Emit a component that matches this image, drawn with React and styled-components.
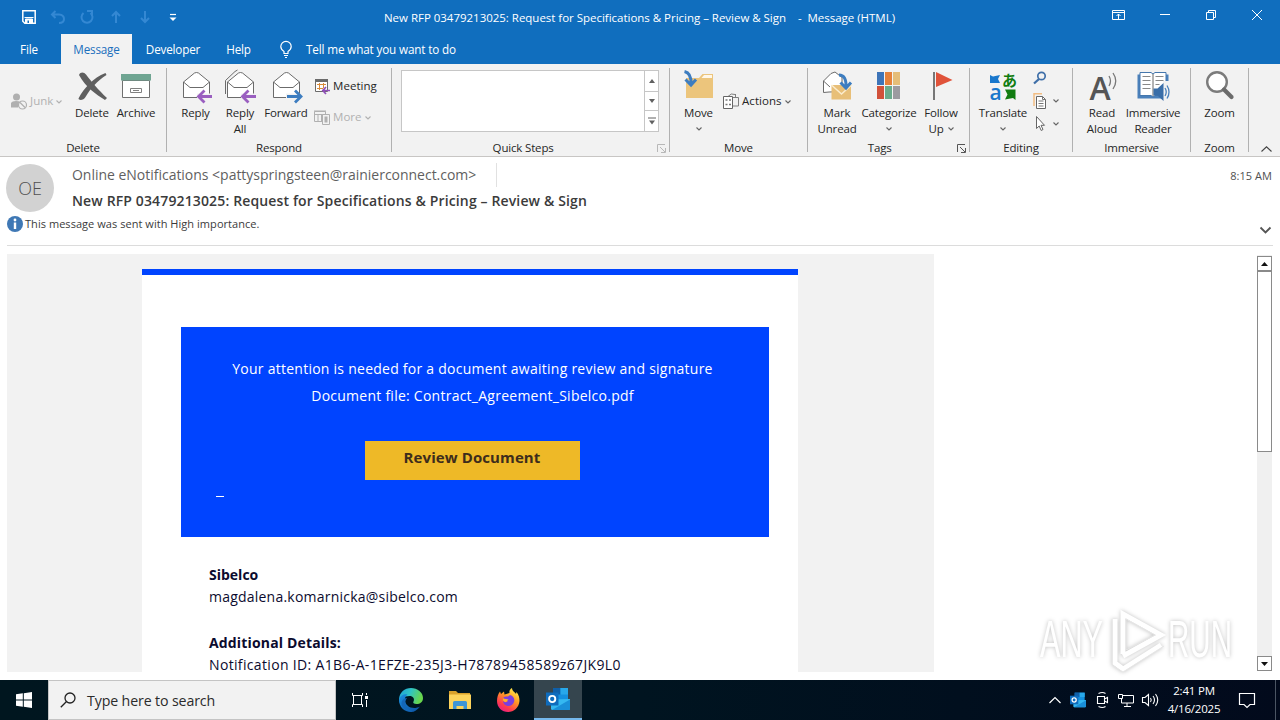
import React from "react";
import styled, { createGlobalStyle } from "styled-components";

const GlobalStyle = createGlobalStyle`
    * {
        box-sizing: border-box;
    }

    body {
        margin: 0;
        background: #fff;
        font-family: "Open Sans", "Noto Sans", sans-serif;
        font-size: 11.5px;
        color: #262626;
        overflow: hidden;
    }

    svg {
        display: block;
        flex: none;
        overflow: visible;
    }
`

const Window = styled.div`
    width: 1280px;
    height: 720px;
    display: flex;
    flex-direction: column;
    position: relative;
    overflow: hidden;
    white-space: nowrap;
`

/* ---------- title bar and tabs ---------- */

const TitleBar = styled.header`
    height: 34px;
    background: #106ebe;
    color: #fff;
    display: grid;
    grid-template-columns: 1fr auto 1fr;
    align-items: center;
`

const QuickAccess = styled.div`
    display: flex;
    align-items: center;
    gap: 13px;
    padding-left: 21px;
`

const Title = styled.div`
    white-space: pre;
    letter-spacing: -0.02px;
    padding-right: 1px;
`

const WindowControls = styled.div`
    display: flex;
    justify-content: flex-end;
    align-items: center;
    gap: 30px;
    padding: 0 15px 4px 0;
`

const Tabs = styled.nav`
    height: 30px;
    background: #106ebe;
    display: flex;
    align-items: stretch;
`

const Tab = styled.div`
    width: ${(p) => p.$w}px;
    display: flex;
    align-items: center;
    justify-content: center;
    font-size: 11.7px;
    letter-spacing: -0.18px;
    padding-bottom: 1px;
    background: ${(p) => (p.$active ? "#f2f2f2" : "transparent")};
    color: ${(p) => (p.$active ? "#1b6fbd" : "#fff")};
`

const TellMe = styled.div`
    display: flex;
    align-items: center;
    gap: 12px;
    margin-left: 15px;
    padding-bottom: 1px;
    color: #fff;
    font-size: 11.7px;
    letter-spacing: -0.14px;
`

/* ---------- ribbon ---------- */

const Ribbon = styled.section`
    height: 93px;
    background: #f2f2f2;
    border-bottom: 1px solid #c8c6c4;
    display: flex;
    letter-spacing: -0.17px;
`

const Group = styled.div`
    width: ${(p) => p.$w}px;
    height: 84px;
    margin-top: 4px;
    border-right: 1px solid #b1b1b1;
`

const GroupBody = styled.div`
    height: 72px;
    display: flex;
    padding-left: ${(p) => p.$pad || 0}px;
`

const GroupName = styled.div`
    height: 16px;
    line-height: 16px;
    display: flex;
    align-items: center;
    padding-right: ${(p) => p.$right || 0}px;

    span {
        flex: 1;
        text-align: center;
    }
`

const BigButton = styled.div`
    width: ${(p) => p.$w}px;
    padding-top: 2px;
    display: flex;
    flex-direction: column;
    align-items: center;
    line-height: 16px;
    text-align: center;

    > svg:first-child {
        margin-bottom: 3px;
    }
`

const Line = styled.div`
    display: flex;
    align-items: center;
    gap: 4px;
    height: 16px;
`

const SmallButtons = styled.div`
    display: flex;
    flex-direction: column;
    gap: ${(p) => p.$gap || 0}px;
    padding-top: ${(p) => p.$top}px;
    padding-left: ${(p) => p.$left || 0}px;
`

const SmallButton = styled.div`
    height: 16px;
    line-height: 14px;
    display: flex;
    align-items: center;
    gap: ${(p) => p.$gap || 4}px;
    color: ${(p) => (p.$disabled ? "#b1b1b1" : "#262626")};
    letter-spacing: 0.05px;
`

const SmallLabel = styled.span`
    padding-bottom: 2px;
`

const Gallery = styled.div`
    width: 258px;
    height: 62px;
    margin-top: 2px;
    background: #fff;
    border: 1px solid #c6c6c6;
    display: flex;
    justify-content: flex-end;
`

const GalleryScroll = styled.div`
    width: 14px;
    border-left: 1px solid #c6c6c6;
    display: grid;
    grid-template-rows: 21px 19px 20px;

    div {
        display: grid;
        place-items: center;
        border-bottom: 1px solid #c6c6c6;
    }

    div:last-child {
        border-bottom: none;
    }
`

const Collapse = styled.div`
    flex: 1;
    display: flex;
    justify-content: flex-end;
    align-items: flex-end;
    padding: 0 8px 4px 0;
`

/* ---------- message header ---------- */

const MessageHeader = styled.section`
    height: 89px;
    margin: 0 7px;
    border-bottom: 1px solid #dcdcdc;
`

const SenderRow = styled.div`
    height: 57px;
    display: flex;
    margin-left: -1px;
    padding-top: 7px;
`

const Avatar = styled.div`
    width: 48px;
    height: 48px;
    border-radius: 50%;
    background: #d2d2d2;
    color: #505050;
    font-size: 18px;
    font-weight: 300;
    display: grid;
    place-items: center;
`

const SenderText = styled.div`
    flex: 1;
    margin-left: 18px;
`

const From = styled.div`
    height: 24px;
    display: flex;
    margin-top: -1px;

    span {
        width: 425px;
        border-right: 1px solid #e1e1e1;
        line-height: 24px;
        font-size: 14px;
        letter-spacing: -0.02px;
        color: #5f5f5f;
    }
`

const Subject = styled.div`
    font-size: 14px;
    font-weight: 600;
    line-height: 20px;
    margin-top: 4px;
    letter-spacing: 0.137px;
    color: #3b3b3b;
`

const Time = styled.div`
    font-size: 11px;
    letter-spacing: 0.05px;
    color: #505050;
    padding-top: 4px;
    margin-right: 1px;
`

const InfoRow = styled.div`
    height: 20px;
    display: flex;
    align-items: center;
    gap: 2px;
    font-size: 11px;
    letter-spacing: 0.045px;
    color: #3b3b3b;

    span {
        padding-bottom: 2px;
    }

    svg:last-child {
        margin: 11px 2px 0 auto;
    }
`

/* ---------- message body ---------- */

const Reading = styled.main`
    height: 434px;
    padding: 8px 8px 8px 7px;
    display: flex;
    justify-content: space-between;
`

const Page = styled.div`
    width: 927px;
    height: 418px;
    background: #f2f2f2;
    padding: 15px 0 0 135px;
`

const Card = styled.article`
    width: 656px;
    height: 403px;
    background: #fff;
    border-top: 6px solid #0044ff;
    padding: 52px 29px 0 39px;
    font-size: 14px;
`

const Notice = styled.div`
    height: 210px;
    background: #0044ff;
    color: #fff;
    padding: 28px 40px 0 35px;
    line-height: 27px;
    display: flex;
    flex-direction: column;
    align-items: center;
    letter-spacing: 0.25px;
`

const ReviewButton = styled.div`
    width: 215px;
    height: 39px;
    margin-top: 32px;
    padding-right: 1px;
    background: #eeb927;
    color: #3d2c1c;
    font-size: 15px;
    font-weight: 700;
    line-height: 32px;
    text-align: center;
    letter-spacing: 0.1px;
`

const Underline = styled.div`
    align-self: flex-start;
    width: 8px;
    height: 1px;
    margin-top: 16px;
    background: #fff;
`

const Details = styled.div`
    padding: 27px 0 0 28px;
    line-height: 22px;
    color: #0b0b2e;

    strong {
        display: block;
        letter-spacing: ${(p) => p.$ls || 0}px;
    }

    & + & {
        padding-top: 24px;
    }
`

const DetailValue = styled.div`
    letter-spacing: ${(p) => p.$ls}px;
`

const Scrollbar = styled.div`
    width: 15px;
    height: 416px;
    margin-top: 1px;
    background: #f0f0f0;
    display: flex;
    flex-direction: column;
`

const ScrollArrow = styled.div`
    height: 15px;
    background: #fff;
    border: 1px solid #8a8a8a;
    display: grid;
    place-items: center;
    margin-top: ${(p) => (p.$bottom ? "auto" : "1px")};
`

const ScrollThumb = styled.div`
    height: 181px;
    background: #fff;
    border: 1px solid #8a8a8a;
`

const Watermark = styled.div`
    position: absolute;
    left: 1036px;
    top: 608px;
    filter: drop-shadow(0 0 2px rgba(0, 0, 0, 0.25));
`

/* ---------- taskbar ---------- */

const Taskbar = styled.footer`
    height: 40px;
    background: linear-gradient(90deg, #00161f, #001420 50%, #020a1c);
    display: flex;
    color: #fff;
`

const TaskButton = styled.div`
    width: ${(p) => p.$w || 49}px;
    display: grid;
    place-items: center;
    background: ${(p) => (p.$active ? "#35454e" : "transparent")};
    border-bottom: ${(p) => (p.$active ? "2px solid #76b9ed" : "none")};
`

const Search = styled.div`
    width: 288px;
    background: #f2f2f2;
    border: 1px solid #c4c4c4;
    color: #2b2b2b;
    display: flex;
    align-items: center;
    gap: 11px;
    padding-left: 11px;
    font-size: 14.2px;
    letter-spacing: -0.13px;
`

const Tray = styled.div`
    margin-left: auto;
    display: flex;
    align-items: center;
    gap: 8px;
`

const Clock = styled.div`
    width: 58px;
    margin: 0 8px 1px -1px;
    text-align: center;
    line-height: 18px;
    letter-spacing: -0.2px;
`

const ShowDesktop = styled.div`
    width: 5px;
    height: 40px;
    margin-left: 12px;
    border-left: 1px solid #4b5563;
`

/* ---------- icons ---------- */

const Svg = ({ w = 16, h = w, children, ...rest }) => (
    <svg width={w} height={h} viewBox={`0 0 ${w} ${h}`} fill="none" {...rest}>
        {children}
    </svg>
)

const Chevron = ({ color = "#666" }) => (
    <Svg w={6} h={4}>
        <path d="M.5 .5 3 3 5.500 .5" stroke={color} strokeWidth="1.100" />
    </Svg>
)

const Triangle = ({ up, color = "#606060", w = 6 }) => (
    <Svg w={w} h={4}>
        <path d={up ? `M0 4 ${w / 2} 0 ${w} 4Z` : `M0 0 ${w / 2} 4 ${w} 0Z`} fill={color} />
    </Svg>
)

const Launcher = ({ color = "#555" }) => (
    <Svg w={9}>
        <path d="M.5 8V.5H8M3 3l5 5M8.500 4v4.500H4" stroke={color} />
    </Svg>
)

const SaveIcon = () => (
    <Svg>
        <path d="M1.800 1.800h12.400v12.400H3.800l-2-2Z" stroke="#fff" strokeWidth="1.500" />
        <path d="M3.500 8.500h9M4.500 10h7v4.500h-7Z" fill="#fff" stroke="#fff" />
        <path d="M6.500 11.500h1.500v2.500H6.500Z" fill="#106ebe" />
    </Svg>
)

const Faded = ({ d }) => (
    <Svg>
        <path d={d} stroke="#3488d3" strokeWidth="2" />
    </Svg>
)

const Envelope = ({ back }) => (
    <g stroke="#6b6b6b">
        {back && <path d="M1.500 24V10.500L11 1.500l2.500-1.500" />}
        <path d="M3.500 12 14.500 3Q16.500 2 18.500 3L29.500 12V27.500H3.500Z" fill="#fff" />
        <path d="M3.500 12 10 17.500H23L29.500 12" />
    </g>
)

const ReplyIcon = ({ all }) => (
    <Svg w={32}>
        <Envelope back={all} />
        <path d="M17 26.500H33" stroke="#f2f2f2" strokeWidth="6" />
        <path d="M18 26.500H32M24.500 20.500l-6 6 6 6" stroke="#9a5fc0" strokeWidth="2.800" />
    </Svg>
)

const ForwardIcon = () => (
    <Svg w={32}>
        <Envelope />
        <path d="M16 26.500H31" stroke="#f2f2f2" strokeWidth="6" />
        <path d="M17 26.500H31M25 20.500l6 6-6 6" stroke="#3d7dc0" strokeWidth="2.800" />
    </Svg>
)

const DeleteIcon = () => (
    <Svg w={32}>
        <path d="M3 5C4.500 1.500 8 2 10 4.500c6 8 12 15 21 23.500l-2 2C20 24.500 9.500 17 3 5Z" fill="#5f5f5f" />
        <path d="M30.500 5C21 11 15 18 9.500 27c-1.500 3-6.500 4-7 1.500C8 18 17 8 29.500 3Z" fill="#5f5f5f" />
    </Svg>
)

const ArchiveIcon = () => (
    <Svg w={32}>
        <path d="M2.500 10.500h27v17h-27Z" fill="#fff" stroke="#707070" />
        <path d="M1 4h30v6.500H1Z" fill="#6fa592" />
        <path d="M10.500 18.500h11v4h-11ZM13 20.500h6" stroke="#808080" />
    </Svg>
)

const JunkIcon = () => (
    <Svg>
        <circle cx="5.500" cy="3" r="3.500" fill="#b0b0b0" />
        <path d="M0 13.500V9Q1 7 5 7q3.500 0 4 1l-2 5.500Z" fill="#b0b0b0" />
        <circle cx="11.500" cy="11" r="4" fill="#f2f2f2" stroke="#b0b0b0" strokeWidth="1.200" />
        <path d="m9 8.500 5 5" stroke="#b0b0b0" strokeWidth="1.200" />
    </Svg>
)

const MeetingIcon = () => (
    <Svg>
        <path d="M1.500 2.500h12v10h-12Z" fill="#fff" stroke="#6b6b6b" />
        <path d="M1 0h13v3H1Z" fill="#6b6b6b" />
        <path d="M3 5.500h9M3 9.500h6M5.500 4v7M9.500 4v5" stroke="#d98b3a" />
        <path d="M9 11.500h7M12 8 8.800 11.500l3.200 3.500" stroke="#8f4fb8" strokeWidth="1.700" />
    </Svg>
)

const MoreIcon = () => (
    <Svg>
        <path d="M.5 1.500h11v10H.5ZM.5 4.500h11M4 4v7M7.500 4v7M0 1h12" stroke="#b0b0b0" />
        <path d="M8.500 4.500h7v10h-7Z" fill="#f2f2f2" stroke="#b0b0b0" />
        <path d="M10.500 6.500h3v6h-3Z" fill="#b0b0b0" />
    </Svg>
)

const MoveIcon = () => (
    <Svg w={32}>
        <path d="M3 8h13l3.500-4H30v24H3Z" fill="#ecc57c" />
        <path d="M18.500 8 21 5h8v3Z" fill="#fff7e8" />
        <path d="M1.500 1.500Q8.500 3 8 14M2.500 9.500l5.500 5.500 5-5.500" stroke="#3d7dc0" strokeWidth="3" />
    </Svg>
)

const ActionsIcon = () => (
    <Svg>
        <path d="M5 2.500Q8-1.500 12 .5M12.500 0v3.500H9M10 3.500h5.500V12H10" stroke="#808080" />
        <path d="M.5 2.500h9v12h-9Z" fill="#fff" stroke="#666" />
        <path d="M2.500 6h2M6 6h2M2.500 10.500h2M6 10.500h2" stroke="#777" strokeWidth="1.500" />
    </Svg>
)

const UnreadIcon = () => (
    <Svg w={32}>
        <path d="M2.500 22.500V11L10 3.500l4-1.500 7 5.500v14L8 22Z" fill="#fff" stroke="#6b6b6b" />
        <path d="M2.500 11 9 17" stroke="#6b6b6b" />
        <path d="M10.500 15H30v14.500H10.500Z" fill="#e8bf78" />
        <path d="m10.500 15 10 9 10-9" stroke="#fbeccd" strokeWidth="1.500" />
        <path d="M18 5Q25.500 5 25 17M19.500 12.500l5.500 5.500 5-5.500" stroke="#3d7dc0" strokeWidth="3" />
    </Svg>
)

const CategorizeIcon = () => (
    <Svg w={32}>
        <path d="M4 2h7v13H4Z" fill="#3d74b8" />
        <path d="M12 2h7v13h-7Z" fill="#e5813a" />
        <path d="M20 2h7v13h-7Z" fill="#e5bd78" />
        <path d="M4 16h7v13H4Z" fill="#d1513a" />
        <path d="M12 16h7v13h-7Z" fill="#6aab8c" />
        <path d="M20 16h7v13h-7Z" fill="#9c9aa0" />
    </Svg>
)

const FlagIcon = () => (
    <Svg w={32}>
        <path d="M9 2v28" stroke="#777" strokeWidth="2" />
        <path d="m11 2 16.500 8L11 17Z" fill="#e0533a" />
    </Svg>
)

const GlyphText = styled.text`
    font-family: "Open Sans", "Noto Sans CJK JP", sans-serif;
    font-size: ${(p) => p.$size}px;
    font-weight: ${(p) => p.$weight || 600};
    letter-spacing: 0;
`

const TranslateIcon = () => (
    <Svg w={32}>
        <path d="M3 5 6 6.500l7-1.500-2 4 2 4H3Z" fill="#1977cc" />
        <path d="M18 19.500h10.500V30L26 28l-8 1.500 2.500-5Z" fill="#107c10" />
        <GlyphText x="15" y="15.500" $size={15} $weight={700} fill="#107c10">あ</GlyphText>
        <GlyphText x="2.500" y="29.500" $size={21} fill="#1977cc">a</GlyphText>
    </Svg>
)

const FindIcon = () => (
    <Svg w={14}>
        <circle cx="8.500" cy="5" r="3.700" stroke="#3f6fa8" strokeWidth="1.700" />
        <path d="m6 8-5 4.500" stroke="#3f6fa8" strokeWidth="2.300" />
    </Svg>
)

const CopyIcon = () => (
    <Svg w={14} h={16}>
        <path d="M1 13V.8h8" stroke="#f2bd83" strokeWidth="1.500" />
        <path d="M3.500 3.500h6l3 3v9h-9Z" fill="#fff" stroke="#666" />
        <path d="M5.500 8h5M5.500 10.500h5M5.500 13h5M9.500 3.500v3h3" stroke="#777" />
    </Svg>
)

const SelectIcon = () => (
    <Svg w={14} h={16}>
        <path d="M3.500 .5v12l2.700-2.500 2 4.500 1.800-1-2-4.200h3.500Z" fill="#fff" stroke="#666" />
    </Svg>
)

const ReadAloudIcon = () => (
    <Svg w={32}>
        <GlyphText x="3.500" y="29.500" $size={32} $weight={600} fill="#555">A</GlyphText>
        <path d="M23 6q3 5 0 10M27 3q5.500 8 0 16" stroke="#777" strokeWidth="1.300" />
    </Svg>
)

const ReaderIcon = () => (
    <Svg w={32}>
        <path d="M.5 4.500h31v24H.5Z" fill="#4a80bb" />
        <path d="M3 2.500h11l2 1.500 2-1.500h11V25.500H18l-2 1.500-2-1.500H3Z" fill="#fff" stroke="#4577ad" />
        <path d="M16 4v22" stroke="#666" />
        <path d="M5.500 6.500h8M5.500 10.500h8M5.500 14.500h8M5.500 18.500h8M18.500 6.500h8M18.500 10.500h8M18.500 14.500h4" stroke="#888" />
        <path d="M26 11v20h6V11Z" fill="#f2f2f2" />
        <path d="M16.500 18.500h4L26.500 13v18l-6-5.500h-4Z" fill="#3a6ea8" />
        <path d="M28 18q2.500 4 0 8M30 15.500q4 6.500 0 13" stroke="#4a80bb" strokeWidth="1.300" />
    </Svg>
)

const ZoomIcon = () => (
    <Svg w={32}>
        <circle cx="13" cy="12" r="9.800" fill="#fff" stroke="#7b7b7b" strokeWidth="2.400" />
        <path d="m20 19.500 7.500 7.500" stroke="#6b6b6b" strokeWidth="4.200" strokeLinecap="round" />
    </Svg>
)

const EdgeIcon = () => (
    <Svg w={24}>
        <defs>
            <linearGradient id="edgeTop" x1="0" y1="0" x2="1" y2=".3">
                <stop offset="0" stopColor="#1ba0d8" />
                <stop offset=".5" stopColor="#2fc3c5" />
                <stop offset="1" stopColor="#68d64d" />
            </linearGradient>
            <linearGradient id="edgeLow" x1="0" y1="0" x2="1" y2="1">
                <stop offset="0" stopColor="#1b8ee0" />
                <stop offset="1" stopColor="#0c4f9e" />
            </linearGradient>
        </defs>
        <path d="M0 11C.5 4.500 5.500 0 12 0s12 4.500 12 10c0 4-3 6-6.500 6-2.500 0-4-1-3-2.500 1.500-3-.5-5.500-4-5.500C5 8 1 11 0 15Z" fill="url(#edgeTop)" />
        <path d="M0 12C1 7.500 5 5.800 8.500 6.500 5 9 5 14 8.500 17.500c3.500 3.300 9 3 12.500 1C18.500 22 15.500 24 12 24 5 24 0 18.500 0 12Z" fill="url(#edgeLow)" />
        <path d="M8 10c-3.500 4-1.500 11 5.500 13.500C6 24 1 18 3 13c1-2 3-3 5-3Z" fill="#1467b8" />
    </Svg>
)

const ExplorerIcon = () => (
    <Svg w={22} h={20}>
        <path d="M0 1h7l2 2h12v4H0Z" fill="#d9a12b" />
        <path d="M0 4.500h22V19H0Z" fill="#fcd35c" />
        <path d="M4 19v-6.500q0-1.500 1.500-1.500h11q1.500 0 1.500 1.500V19h-3.500v-3h-7v3Z" fill="#3f95d6" />
    </Svg>
)

const FirefoxIcon = () => (
    <Svg w={24}>
        <defs>
            <linearGradient id="fox" x1=".8" y1="0" x2=".2" y2="1">
                <stop offset="0" stopColor="#fff44f" />
                <stop offset=".4" stopColor="#ff9a24" />
                <stop offset=".75" stopColor="#ff3b4e" />
                <stop offset="1" stopColor="#e81a8a" />
            </linearGradient>
        </defs>
        <path d="M1 13c0-4 1-7 3-9.500L5 6l3-2.500.5 3 5-1.500C13 3 14 1 16 0c0 3 3 4 4 6l.5-2C23 7 23.500 10 23.500 13 23 19.500 18 24 12 24S1 19.500 1 13Z" fill="url(#fox)" />
        <path d="M7.500 9.500c2-1.500 3-1 4.500-1l2-1.500c3.500 1 5 4 4 7s-4 4.500-6.500 4S7 15.500 7 13c1.500 1.500 3.500 1.500 5 .5-2-.5-4.500-1.500-4.500-4Z" fill="#7a3fe0" />
        <path d="M7 10.500c2.500 0 4 1 5.500 1l-2.500 2.500c-2 0-3.500-1.500-3-3.500Z" fill="#ffb02e" />
    </Svg>
)

const OutlookIcon = ({ size = 24 }) => (
    <svg width={size} height={size} viewBox="0 0 24 24">
        <path d="M7 1h15v13H7Z" fill="#1490df" />
        <path d="M7 1h7.500v6.500H7Z" fill="#0f5fa8" />
        <path d="M14.500 1H22v6.500h-7.500Z" fill="#28a8ea" />
        <path d="M5 12.500 24 12v9.500q0 1.500-1.500 1.500h-16Q5 23 5 21.500Z" fill="#35b8f1" />
        <path d="M24 12.500 6 23h17q1-.5 1-1.500Z" fill="#1a8fd8" />
        <path d="M0 5.500h12.500v13H0Z" fill="#0f6cbd" />
        <circle cx="6.200" cy="12" r="3.100" fill="none" stroke="#fff" strokeWidth="1.900" />
    </svg>
)

const App = () => {
    return (
        <Window>
            <GlobalStyle />

            <TitleBar>
                <QuickAccess>
                    <SaveIcon />
                    <Faded d="M5.500 2 2 5.500 5.500 9M2.500 5.500H9q5 .5 5 4.500t-5 4" />
                    <Faded d="M4.500 4A5.500 5.500 0 1 0 11.500 4M8 2h5v5" />
                    <Faded d="M8 14V3M4 7l4-4 4 4" />
                    <Faded d="M8 2v11M4 9l4 4 4-4" />
                    <Svg w={16}>
                        <path d="M4 5.500h6" stroke="#fff" strokeWidth="1.200" />
                        <path d="M3.500 8.500h7L7 12Z" fill="#fff" />
                    </Svg>
                </QuickAccess>
                <Title>{"New RFP 03479213025: Request for Specifications & Pricing – Review & Sign    -  Message (HTML)"}</Title>
                <WindowControls>
                    <Svg w={16}>
                        <path d="M1.500 3.500h12v9h-12ZM1.500 5.500h12M7.500 12V7M5.500 9l2-2 2 2" stroke="#fff" />
                    </Svg>
                    <Svg w={16}>
                        <path d="M3 7.500h10" stroke="#fff" />
                    </Svg>
                    <Svg w={16}>
                        <path d="M3.500 5.500h7v7h-7ZM5.500 5V3.500h7v7H11" stroke="#fff" />
                    </Svg>
                    <Svg w={16}>
                        <path d="m3 3 10 10M13 3 3 13" stroke="#fff" />
                    </Svg>
                </WindowControls>
            </TitleBar>

            <Tabs>
                <Tab $w={58}>File</Tab>
                <Tab $w={3} />
                <Tab $w={71} $active>Message</Tab>
                <Tab $w={82}>Developer</Tab>
                <Tab $w={49}>Help</Tab>
                <TellMe>
                    <Svg w={16} h={18}>
                        <path d="M6 13.500V11.500Q2.800 9.500 2.800 6.500a5.200 5.200 0 0 1 10.400 0q0 3-3.200 5v2ZM6 15.500h4M7 17.500h2" stroke="#fff" strokeWidth="1.200" />
                    </Svg>
                    Tell me what you want to do
                </TellMe>
            </Tabs>

            <Ribbon>
                <Group $w={167}>
                    <GroupBody>
                        <SmallButtons $top={26} $left={11}>
                            <SmallButton $disabled $gap={3}>
                                <JunkIcon />
                                <SmallLabel>Junk</SmallLabel>
                                <Chevron color="#b1b1b1" />
                            </SmallButton>
                        </SmallButtons>
                        <BigButton $w={59}>
                            <DeleteIcon />
                            Delete
                        </BigButton>
                        <BigButton $w={29}>
                            <ArchiveIcon />
                            Archive
                        </BigButton>
                    </GroupBody>
                    <GroupName><span>Delete</span></GroupName>
                </Group>

                <Group $w={225}>
                    <GroupBody $pad={5}>
                        <BigButton $w={47}>
                            <ReplyIcon />
                            Reply
                        </BigButton>
                        <BigButton $w={42}>
                            <ReplyIcon all />
                            <Line>Reply</Line>
                            <Line>All</Line>
                        </BigButton>
                        <BigButton $w={50}>
                            <ForwardIcon />
                            Forward
                        </BigButton>
                        <SmallButtons $top={11} $left={3} $gap={15}>
                            <SmallButton $gap={3}>
                                <MeetingIcon />
                                <SmallLabel>Meeting</SmallLabel>
                            </SmallButton>
                            <SmallButton $disabled $gap={3}>
                                <MoreIcon />
                                <SmallLabel>More</SmallLabel>
                                <Chevron color="#b1b1b1" />
                            </SmallButton>
                        </SmallButtons>
                    </GroupBody>
                    <GroupName><span>Respond</span></GroupName>
                </Group>

                <Group $w={278}>
                    <GroupBody $pad={9}>
                        <Gallery>
                            <GalleryScroll>
                                <div><Triangle up /></div>
                                <div><Triangle /></div>
                                <div>
                                    <Svg w={8} h={8}>
                                        <path d="M0 1h8" stroke="#606060" />
                                        <path d="M1 3.500h6L4 7.500Z" fill="#606060" />
                                    </Svg>
                                </div>
                            </GalleryScroll>
                        </Gallery>
                    </GroupBody>
                    <GroupName $right={3}>
                        <span>Quick Steps&nbsp;</span>
                        <Launcher color="#b8b8b8" />
                    </GroupName>
                </Group>

                <Group $w={138}>
                    <GroupBody $pad={4}>
                        <BigButton $w={49}>
                            <MoveIcon />
                            <Line>Move</Line>
                            <Line><Chevron /></Line>
                        </BigButton>
                        <SmallButtons $top={26}>
                            <SmallButton $gap={3}>
                                <ActionsIcon />
                                <SmallLabel>Actions</SmallLabel>
                                <Chevron />
                            </SmallButton>
                        </SmallButtons>
                    </GroupBody>
                    <GroupName><span>Move</span></GroupName>
                </Group>

                <Group $w={162}>
                    <GroupBody $pad={4}>
                        <BigButton $w={50}>
                            <UnreadIcon />
                            <Line>Mark</Line>
                            <Line>Unread</Line>
                        </BigButton>
                        <BigButton $w={54}>
                            <CategorizeIcon />
                            <Line>Categorize</Line>
                            <Line><Chevron /></Line>
                        </BigButton>
                        <BigButton $w={50}>
                            <FlagIcon />
                            <Line>Follow</Line>
                            <Line>Up <Chevron /></Line>
                        </BigButton>
                    </GroupBody>
                    <GroupName $right={3}>
                        <span>Tags&nbsp;&nbsp;</span>
                        <Launcher />
                    </GroupName>
                </Group>

                <Group $w={103}>
                    <GroupBody $pad={6}>
                        <BigButton $w={54}>
                            <TranslateIcon />
                            <Line>Translate</Line>
                            <Line><Chevron /></Line>
                        </BigButton>
                        <SmallButtons $top={2} $left={3} $gap={7}>
                            <SmallButton>
                                <FindIcon />
                            </SmallButton>
                            <SmallButton $gap={6}>
                                <CopyIcon />
                                <Chevron />
                            </SmallButton>
                            <SmallButton $gap={6}>
                                <SelectIcon />
                                <Chevron />
                            </SmallButton>
                        </SmallButtons>
                    </GroupBody>
                    <GroupName><span>Editing</span></GroupName>
                </Group>

                <Group $w={118}>
                    <GroupBody $pad={5}>
                        <BigButton $w={48}>
                            <ReadAloudIcon />
                            <Line>Read</Line>
                            <Line>Aloud</Line>
                        </BigButton>
                        <BigButton $w={54}>
                            <ReaderIcon />
                            <Line>Immersive</Line>
                            <Line>Reader</Line>
                        </BigButton>
                    </GroupBody>
                    <GroupName><span>Immersive</span></GroupName>
                </Group>

                <Group $w={58}>
                    <GroupBody>
                        <BigButton $w={57}>
                            <ZoomIcon />
                            Zoom
                        </BigButton>
                    </GroupBody>
                    <GroupName><span>Zoom</span></GroupName>
                </Group>

                <Collapse>
                    <Svg w={11} h={6}>
                        <path d="M.5 5.500 5.500 .8l5 4.700" stroke="#444" strokeWidth="1.100" />
                    </Svg>
                </Collapse>
            </Ribbon>

            <MessageHeader>
                <SenderRow>
                    <Avatar>OE</Avatar>
                    <SenderText>
                        <From><span>Online eNotifications &lt;pattyspringsteen@rainierconnect.com&gt;</span></From>
                        <Subject>New RFP 03479213025: Request for Specifications &amp; Pricing – Review &amp; Sign</Subject>
                    </SenderText>
                    <Time>8:15 AM</Time>
                </SenderRow>
                <InfoRow>
                    <Svg>
                        <circle cx="8" cy="8" r="8" fill="#3f78b5" />
                        <circle cx="8" cy="4" r="1.400" fill="#fff" />
                        <path d="M8 6.500V13" stroke="#fff" strokeWidth="2.400" />
                    </Svg>
                    <span>This message was sent with High importance.</span>
                    <Svg w={12} h={8}>
                        <path d="m1.500 1.500 5 5 5-5" stroke="#555" strokeWidth="1.800" />
                    </Svg>
                </InfoRow>
            </MessageHeader>

            <Reading>
                <Page>
                    <Card>
                        <Notice>
                            <div>Your attention is needed for a document awaiting review and signature</div>
                            <div>Document file: Contract_Agreement_Sibelco.pdf</div>
                            <ReviewButton>Review Document</ReviewButton>
                            <Underline />
                        </Notice>
                        <Details>
                            <strong>Sibelco</strong>
                            <DetailValue $ls={0.22}>magdalena.komarnicka@sibelco.com</DetailValue>
                        </Details>
                        <Details $ls={0.16}>
                            <strong>Additional Details:</strong>
                            <DetailValue $ls={0.34}>Notification ID: A1B6-A-1EFZE-235J3-H78789458589z67JK9L0</DetailValue>
                        </Details>
                    </Card>
                </Page>
                <Scrollbar>
                    <ScrollArrow><Triangle up w={7} color="#111" /></ScrollArrow>
                    <ScrollThumb />
                    <ScrollArrow $bottom><Triangle w={7} color="#111" /></ScrollArrow>
                </Scrollbar>
            </Reading>

            <Taskbar>
                <TaskButton $w={48}>
                    <Svg w={16}>
                        <path d="M0 2.300 6.800 1.300v6.200H0ZM7.800 1.200 16 0v7.500H7.800ZM0 8.500h6.800v6.200L0 13.700ZM7.800 8.500H16V16l-8.200-1.200Z" fill="#fff" />
                    </Svg>
                </TaskButton>
                <Search>
                    <Svg w={16}>
                        <circle cx="10" cy="6" r="5" stroke="#222" strokeWidth="1.300" />
                        <path d="M6.500 9.500.8 15.200" stroke="#222" strokeWidth="1.300" />
                    </Svg>
                    Type here to search
                </Search>
                <TaskButton $w={48}>
                    <Svg>
                        <path d="M.5 1v2.500h10V1M.5 15v-2.500h10V15M1.500 3.500v9M9.500 3.500v9M14.500 1v2M14.500 8v7" stroke="#fff" />
                        <path d="M13 4h3v3h-3Z" fill="#fff" />
                    </Svg>
                </TaskButton>
                <TaskButton $w={53}><EdgeIcon /></TaskButton>
                <TaskButton $w={45}><ExplorerIcon /></TaskButton>
                <TaskButton $w={52}><FirefoxIcon /></TaskButton>
                <TaskButton $w={48} $active><OutlookIcon /></TaskButton>
                <Tray>
                    <Svg w={14} h={8}>
                        <path d="m1.500 7 5.500-5.500L12.500 7" stroke="#fff" strokeWidth="1.200" />
                    </Svg>
                    <OutlookIcon size={16} />
                    <Svg w={16}>
                        <path d="M3.500 4.500h7v7h-7ZM10.500 7l3-1.500v5l-3-1.500M4.500 1.500q4-2 7 0M4.500 14.500q4 2 7 0" stroke="#fff" strokeWidth="1.100" />
                    </Svg>
                    <Svg w={16}>
                        <path d="M5 3.500h10.500v7.500H3.500V7M9 11v3M6 14.500h7M.5 2.500h4v4h-4Z" stroke="#fff" />
                    </Svg>
                    <Svg w={16}>
                        <path d="M.5 5.500h2.500L6.500 2.500v11L3 10.500H.5ZM8.500 6q1.500 2 0 4M11 4q3 4 0 8M13.500 2q4.500 6 0 12" stroke="#fff" strokeWidth="1.100" />
                    </Svg>
                    <Clock>
                        <div>2:41 PM</div>
                        <div>4/16/2025</div>
                    </Clock>
                    <Svg w={16}>
                        <path d="M.5 1.500h15v11H11l-3 3-3-3H.5Z" stroke="#fff" strokeWidth="1.200" />
                    </Svg>
                    <ShowDesktop />
                </Tray>
            </Taskbar>

            <Watermark>
                <Svg w={200} h={64}>
                    <g fill="#fff" fontFamily="Liberation Sans" fontSize="51">
                        <text x="4" y="49" textLength="63" lengthAdjust="spacingAndGlyphs">ANY</text>
                        <text x="132" y="49" textLength="64" lengthAdjust="spacingAndGlyphs">RUN</text>
                    </g>
                    <path d="M87 46V6l38 21-38 21M79 11v44l8 6 38-24" stroke="#fff" strokeWidth="5" />
                    <path d="M90 42V11l29 16-29 15M76 11v46l11 7 41-26" stroke="#e6e6e6" />
                </Svg>
            </Watermark>
        </Window>
    )
}

export default App
